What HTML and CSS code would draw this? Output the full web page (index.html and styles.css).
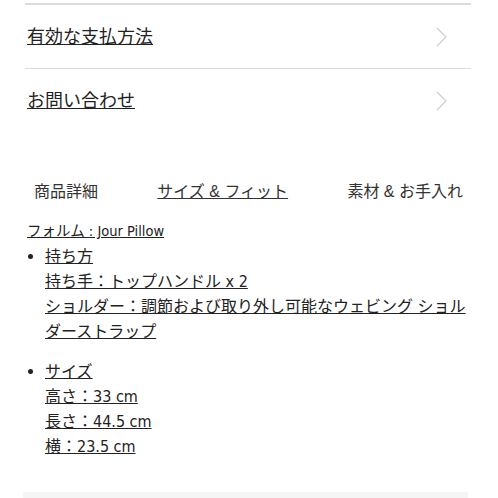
FILE: index.html
```html
<!DOCTYPE html>
<html lang="ja">
<head>
    <meta charset="UTF-8">
    <meta name="viewport" content="width=device-width, initial-scale=1.0">
    <title>商品詳細</title>
    <link rel="stylesheet" href="styles.css">
</head>
<body>
    <div class="page">
        <ul class="menu">
            <li class="menu-item first">
                <a href="javascript:;">有効な支払方法</a>
                <svg class="chevron" width="11" height="20" viewBox="0 0 11 20"><path d="M1 1 L10 10 L1 19" fill="none" stroke="#cfcfcf" stroke-width="1.2"/></svg>
            </li>
            <li class="menu-item">
                <a href="javascript:;">お問い合わせ</a>
                <svg class="chevron" width="11" height="20" viewBox="0 0 11 20"><path d="M1 1 L10 10 L1 19" fill="none" stroke="#cfcfcf" stroke-width="1.2"/></svg>
            </li>
        </ul>

        <div class="tabs">
            <a href="javascript:;" class="tab">商品詳細</a>
            <a href="javascript:;" class="tab active">サイズ &amp; フィット</a>
            <a href="javascript:;" class="tab">素材 &amp; お手入れ</a>
        </div>

        <div class="detail">
            <p class="form-name">フォルム : Jour Pillow</p>
            <ul class="spec">
                <li>
                    <span>持ち方</span><br>
                    <span>持ち手：トップハンドル x 2</span><br>
                    <span>ショルダー：調節および取り外し可能なウェビング ショルダーストラップ</span>
                </li>
            </ul>
            <ul class="spec">
                <li>
                    <span>サイズ</span><br>
                    <span>高さ：33 cm</span><br>
                    <span>長さ：44.5 cm</span><br>
                    <span>横：23.5 cm</span>
                </li>
            </ul>
        </div>

        <div class="footer-band"></div>
    </div>
</body>
</html>
```

FILE: styles.css
```css
* {
    margin: 0;
    padding: 0;
}
body {
    background: #ffffff;
    color: #222222;
    font-family: "Liberation Sans", "Noto Sans CJK JP", sans-serif;
}
a {
    color: #222222;
}
.page {
    padding: 3px 27px 0 25px;
}
.menu {
    list-style: none;
}
.menu-item {
    display: flex;
    align-items: center;
    justify-content: space-between;
    height: 63px;
    padding: 0 24px 0 2px;
    border-top: 1px solid #dcdcdc;
}
.menu-item.first {
    border-top: 2px solid #dcdcdc;
}
.menu-item a {
    font-size: 18px;
    line-height: 26px;
}
.chevron {
    display: block;
}
.tabs {
    display: flex;
    justify-content: space-between;
    margin-top: 48px;
    padding: 0 8px 0 9px;
    font-size: 16px;
    line-height: 24px;
}
.tab {
    text-decoration: none;
    color: #333333;
}
.tab.active {
    text-decoration: underline;
}
.detail {
    padding-left: 2px;
    font-family: "DejaVu Sans Condensed", "DejaVu Sans", "Noto Sans CJK JP", sans-serif;
    font-stretch: condensed;
    color: #222222;
}
.form-name {
    margin-top: 15px;
    font-size: 14.5px;
    line-height: 25px;
    text-decoration: underline;
}
.spec {
    padding-left: 18px;
    font-size: 16px;
    line-height: 25px;
}
.spec + .spec {
    margin-top: 15px;
}
.spec li span {
    text-decoration: underline;
}
.footer-band {
    margin: 33px 3px 0 -2px;
    height: 20px;
    background: #f5f5f5;
}
```
